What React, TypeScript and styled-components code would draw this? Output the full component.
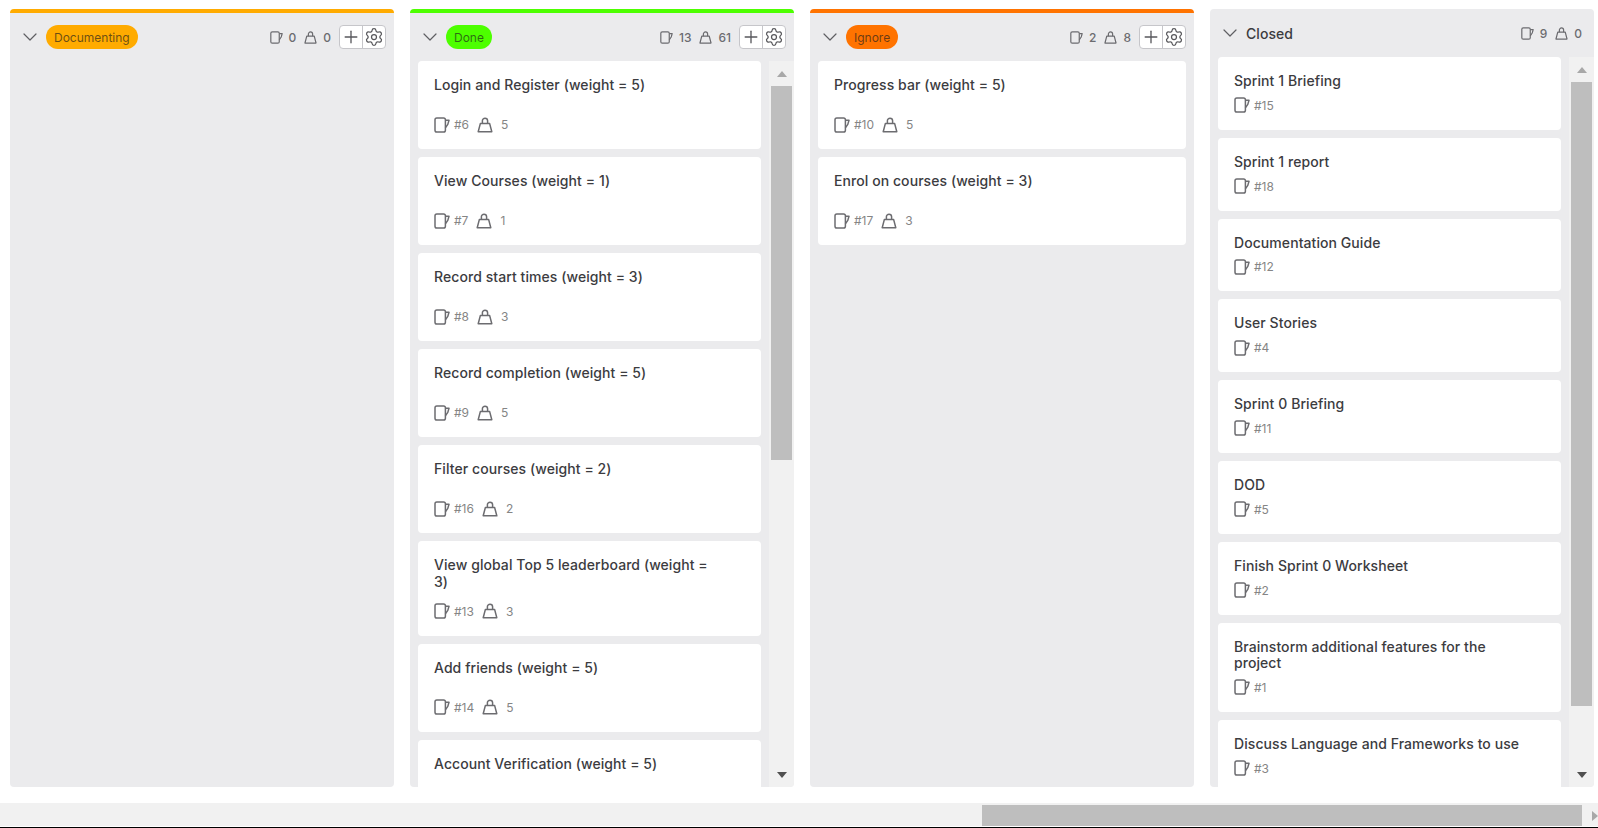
import React from "react"
import styled, { createGlobalStyle } from "styled-components"
import { ChevronDown, Plus, Settings } from "lucide-react"

const GlobalStyle = createGlobalStyle`
    html, body {
        margin: 0;
        padding: 0;
        background: #fff;
        overflow: hidden;
    }
    * {
        box-sizing: border-box;
    }
    body {
        font-family: Inter, "Noto Sans", sans-serif;
    }
`

type Issue = { title: string; id: number; weight?: number }

type ColumnData = {
    name: string
    color?: string
    issues: number
    weight: number
    items: Issue[]
    thumb?: number
}

const columns: ColumnData[] = [
    { name: "Documenting", color: "#ffab00", issues: 0, weight: 0, items: [] },
    {
        name: "Done",
        color: "#4dff00",
        issues: 13,
        weight: 61,
        thumb: 374,
        items: [
            { title: "Login and Register (weight = 5)", id: 6, weight: 5 },
            { title: "View Courses (weight = 1)", id: 7, weight: 1 },
            { title: "Record start times (weight = 3)", id: 8, weight: 3 },
            { title: "Record completion (weight = 5)", id: 9, weight: 5 },
            { title: "Filter courses (weight = 2)", id: 16, weight: 2 },
            { title: "View global Top 5 leaderboard (weight = 3)", id: 13, weight: 3 },
            { title: "Add friends (weight = 5)", id: 14, weight: 5 },
            { title: "Account Verification (weight = 5)", id: 19, weight: 5 },
        ],
    },
    {
        name: "Ignore",
        color: "#ff7300",
        issues: 2,
        weight: 8,
        items: [
            { title: "Progress bar (weight = 5)", id: 10, weight: 5 },
            { title: "Enrol on courses (weight = 3)", id: 17, weight: 3 },
        ],
    },
    {
        name: "Closed",
        issues: 9,
        weight: 0,
        thumb: 624,
        items: [
            { title: "Sprint 1 Briefing", id: 15 },
            { title: "Sprint 1 report", id: 18 },
            { title: "Documentation Guide", id: 12 },
            { title: "User Stories", id: 4 },
            { title: "Sprint 0 Briefing", id: 11 },
            { title: "DOD", id: 5 },
            { title: "Finish Sprint 0 Worksheet", id: 2 },
            { title: "Brainstorm additional features for the project", id: 1 },
            { title: "Discuss Language and Frameworks to use", id: 3 },
        ],
    },
]

const IssueIcon: React.FC<{ size: number }> = ({ size }) => (
    <svg width={size} height={size} viewBox="0 0 16 16" fill="none" stroke="currentColor" strokeWidth="1.5" strokeLinejoin="round">
        <rect x="1" y="1" width="10.4" height="14" rx="1.8" />
        <path d="M11.4 3.2H15L13.8 7.4L11.4 10.8" />
    </svg>
)

const WeightIcon: React.FC<{ size: number }> = ({ size }) => (
    <svg width={size} height={size} viewBox="0 0 16 16" fill="none" stroke="currentColor" strokeWidth="1.5" strokeLinejoin="round">
        <path d="M3.4 6.4H12.6L14.8 14.8H1.2Z" />
        <path d="M5.4 6.4V3.8A2.6 2.6 0 0 1 10.6 3.8V6.4" />
    </svg>
)

const App: React.FC = () => (
    <Page>
        <GlobalStyle />
        <Board>
            {columns.map(column => (
                <Column key={column.name} $color={column.color}>
                    <Header $labelled={Boolean(column.color)}>
                        <Toggle>
                            <ChevronDown size={24} strokeWidth={1.2} />
                        </Toggle>
                        {column.color ? <Pill $color={column.color}>{column.name}</Pill> : <PlainName>{column.name}</PlainName>}
                        <Counters>
                            <Counter>
                                <IssueIcon size={13} />
                                {column.issues}
                            </Counter>
                            <Counter>
                                <WeightIcon size={13} />
                                {column.weight}
                            </Counter>
                        </Counters>
                        {column.color && (
                            <ButtonGroup>
                                <IconButton>
                                    <Plus size={20} strokeWidth={1.6} />
                                </IconButton>
                                <IconButton>
                                    <Settings size={20} strokeWidth={1.5} />
                                </IconButton>
                            </ButtonGroup>
                        )}
                    </Header>
                    <Body>
                        <CardList>
                            {column.items.map(item => (
                                <Card key={item.id}>
                                    <CardTitle $weighted={item.weight !== undefined}>{item.title}</CardTitle>
                                    <CardMeta>
                                        <MetaIcon>
                                            <IssueIcon size={16} />
                                        </MetaIcon>
                                        <MetaText>#{item.id}</MetaText>
                                        {item.weight !== undefined && (
                                            <>
                                                <MetaIcon $spaced>
                                                    <WeightIcon size={16} />
                                                </MetaIcon>
                                                <MetaText $spaced>{item.weight}</MetaText>
                                            </>
                                        )}
                                    </CardMeta>
                                </Card>
                            ))}
                        </CardList>
                        {column.thumb && (
                            <VScrollbar>
                                <ArrowBox>
                                    <ArrowUp />
                                </ArrowBox>
                                <VThumb $height={column.thumb} />
                                <ArrowBox>
                                    <ArrowDown />
                                </ArrowBox>
                            </VScrollbar>
                        )}
                    </Body>
                </Column>
            ))}
        </Board>
        <HScrollbar>
            <HThumb />
            <ArrowRight />
        </HScrollbar>
        <BottomEdge />
    </Page>
)

export default App

const Page = styled.div`
    width: 100%;
    height: 100vh;
    display: flex;
    flex-direction: column;
    overflow: hidden;
`
const Board = styled.div`
    flex: 1;
    min-height: 0;
    display: flex;
    gap: 16px;
    padding: 9px 0 16px 10px;
`
const Column = styled.section<{ $color?: string }>`
    flex: 0 0 384px;
    display: flex;
    flex-direction: column;
    background: #ebebed;
    border-radius: 4px;
    overflow: hidden;
    border-top: ${p => (p.$color ? `4px solid ${p.$color}` : "0")};
`
const Header = styled.header<{ $labelled: boolean }>`
    flex: none;
    height: 48px;
    display: flex;
    align-items: center;
    padding: ${p => (p.$labelled ? "0 8px" : "0 12px 0 8px")};
`
const Toggle = styled.span`
    display: flex;
    color: #5f5f63;
`
const Pill = styled.span<{ $color: string }>`
    height: 24px;
    margin-left: 4px;
    padding: 0 8px;
    display: flex;
    align-items: center;
    border-radius: 12px;
    background: ${p => p.$color};
    color: rgba(30, 30, 30, 0.68);
    font-size: 12px;
`
const PlainName = styled.span`
    margin-left: 4px;
    color: #3c3c3f;
    font-size: 14px;
    font-weight: 500;
    letter-spacing: 0.07px;
`
const Counters = styled.div`
    margin-left: auto;
    display: flex;
    gap: 8px;
`
const Counter = styled.span`
    display: flex;
    align-items: center;
    gap: 6px;
    color: #6c6c70;
    font-size: 12px;
    font-weight: 500;
`
const ButtonGroup = styled.div`
    margin-left: 8px;
    width: 47px;
    height: 24px;
    display: flex;
    background: #fff;
    border: 1px solid #c6c6ca;
    border-radius: 4px;
`
const IconButton = styled.span`
    flex: 1;
    display: flex;
    align-items: center;
    justify-content: center;
    color: #58585c;
    & + & {
        border-left: 1px solid #c6c6ca;
    }
`
const Body = styled.div`
    flex: 1;
    min-height: 0;
    display: flex;
`
const CardList = styled.div`
    flex: 1;
    min-width: 0;
    overflow: hidden;
    display: flex;
    flex-direction: column;
    gap: 8px;
    padding: 0 8px;
`
const Card = styled.article`
    flex: none;
    padding: 16px 16px 17px;
    background: #fff;
    border-radius: 4px;
`
const CardTitle = styled.h4<{ $weighted: boolean }>`
    margin: 0 0 ${p => (p.$weighted ? "13.5px" : "8.3px")};
    min-height: ${p => (p.$weighted ? "26.5px" : "0")};
    padding-right: 24px;
    color: #3c3c3f;
    font-size: 14px;
    font-weight: 500;
    letter-spacing: 0.07px;
    line-height: 16.5px;
`
const CardMeta = styled.div`
    height: 15px;
    display: flex;
    align-items: center;
    color: #6c6c70;
`
const MetaIcon = styled.span<{ $spaced?: boolean }>`
    display: flex;
    margin-left: ${p => (p.$spaced ? "8px" : "0")};
`
const MetaText = styled.span<{ $spaced?: boolean }>`
    margin-left: ${p => (p.$spaced ? "8px" : "4px")};
    color: #858585;
    font-size: 12px;
`
const VScrollbar = styled.div`
    flex: 0 0 25px;
    display: flex;
    flex-direction: column;
    background: #f1f1f1;
`
const ArrowBox = styled.div`
    flex: 0 0 25px;
    display: flex;
    align-items: center;
    justify-content: center;
`
const VThumb = styled.div<{ $height: number }>`
    height: ${p => p.$height}px;
    margin: 0 2px auto;
    background: #bebebe;
`
const ArrowUp = styled.span`
    border: 5.5px solid transparent;
    border-top: 0;
    border-bottom: 6px solid #a8a8a8;
`
const ArrowDown = styled.span`
    border: 5.5px solid transparent;
    border-bottom: 0;
    border-top: 6px solid #505050;
`
const HScrollbar = styled.div`
    flex: 0 0 23px;
    display: flex;
    align-items: center;
    padding-top: 2px;
    background: #f1f1f1;
`
const HThumb = styled.div`
    height: 21px;
    width: 603px;
    margin-left: 982px;
    background: #bebebe;
`
const ArrowRight = styled.span`
    margin-left: 10px;
    border: 5.5px solid transparent;
    border-right: 0;
    border-left: 6px solid #a8a8a8;
`
const BottomEdge = styled.div`
    flex: 0 0 2px;
    background: #000;
    border-top: 1px solid #fff;
`
